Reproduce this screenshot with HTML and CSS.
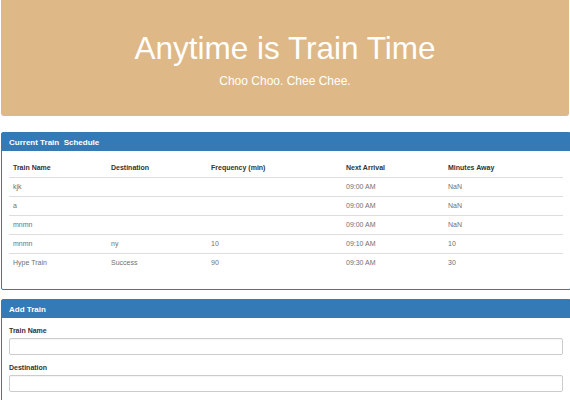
FILE: index.html
```html
<!DOCTYPE html>
<html>
<head>
<meta charset="utf-8">
<link rel="stylesheet" href="styles.css">
</head>
<body>
<div class="page">
  <div class="jumbotron">
    <h1 class="title">Anytime is Train Time</h1>
    <p class="subtitle">Choo Choo. Chee Chee.</p>
  </div>

  <div class="panel panel-schedule">
    <div class="panel-heading">Current Train&nbsp; Schedule</div>
    <div class="panel-body">
      <table class="schedule">
        <colgroup>
          <col class="c1">
          <col class="c2">
          <col class="c3">
          <col class="c4">
          <col class="c5">
        </colgroup>
        <thead>
          <tr>
            <th>Train Name</th>
            <th>Destination</th>
            <th>Frequency (min)</th>
            <th>Next Arrival</th>
            <th>Minutes Away</th>
          </tr>
        </thead>
        <tbody>
          <tr><td>kjk</td><td></td><td></td><td>09:00 AM</td><td>NaN</td></tr>
          <tr><td>a</td><td></td><td></td><td>09:00 AM</td><td>NaN</td></tr>
          <tr><td>mnmn</td><td></td><td></td><td>09:00 AM</td><td>NaN</td></tr>
          <tr><td>mnmn</td><td>ny</td><td>10</td><td>09:10 AM</td><td>10</td></tr>
          <tr><td>Hype Train</td><td>Success</td><td>90</td><td>09:30 AM</td><td>30</td></tr>
        </tbody>
      </table>
    </div>
  </div>

  <div class="panel">
    <div class="panel-heading">Add Train</div>
    <div class="panel-body">
      <div class="form-group">
        <label class="label">Train Name</label>
        <input class="input" type="text">
      </div>
      <div class="form-group">
        <label class="label">Destination</label>
        <input class="input" type="text">
      </div>
    </div>
  </div>
</div>
</body>
</html>
```

FILE: styles.css
```css
html, body {
  margin: 0;
  padding: 0;
  overflow: hidden;
  background: #fff;
}
body {
  font-family: "Liberation Sans", Arial, sans-serif;
  color: #333;
}
.page {
  padding: 0 1px;
}
.jumbotron {
  background: #deb887;
  border-radius: 0 0 3px 3px;
  width: 568px;
  height: 116px;
  box-sizing: border-box;
  padding-top: 30.8px;
  text-align: center;
  color: #fff;
  margin-bottom: 16px;
}
.title {
  margin: 0;
  font-size: 31.5px;
  line-height: 1.1;
  font-weight: normal;
}
.subtitle {
  margin: 7.1px 0 0;
  font-size: 12px;
  line-height: 16.8px;
}
.panel {
  width: 570px;
  box-sizing: border-box;
  border: 1px solid #337ab7;
  border-radius: 2px;
  background: #fff;
}
.panel-schedule {
  margin-bottom: 9px;
}
.panel-heading {
  background: #337ab7;
  color: #fff;
  font-weight: bold;
  font-size: 8px;
  line-height: 9px;
  padding: 4.5px 7px;
}
.panel-body {
  padding: 7.5px 7px;
}
.schedule {
  width: 554px;
  table-layout: fixed;
  border-collapse: collapse;
  border-spacing: 0;
  margin-bottom: 10px;
  font-size: 7px;
  line-height: 10px;
}
.schedule th {
  text-align: left;
  font-weight: bold;
  color: #333;
  padding: 4px;
  border-bottom: 1px solid #ddd;
}
.schedule td {
  padding: 4px;
  color: #707070;
  border-top: 1px solid #ddd;
  height: 10px;
}
.schedule tbody tr:first-child td {
  border-top: 0;
}
.c1 { width: 98px; }
.c2 { width: 100px; }
.c3 { width: 135px; }
.c4 { width: 102px; }
.c5 { width: 119px; }
.form-group {
  margin-bottom: 7.5px;
}
.label {
  display: block;
  font-size: 7px;
  line-height: 10px;
  font-weight: bold;
  color: #333;
  margin-bottom: 2.5px;
}
.input {
  display: block;
  width: 100%;
  height: 17px;
  box-sizing: border-box;
  border: 1px solid #ccc;
  border-radius: 2px;
  box-shadow: inset 0 0.5px 0.5px rgba(0,0,0,0.075);
  padding: 3px 6px;
  margin: 0;
  font-size: 7px;
  background: #fff;
  outline: none;
}
```
